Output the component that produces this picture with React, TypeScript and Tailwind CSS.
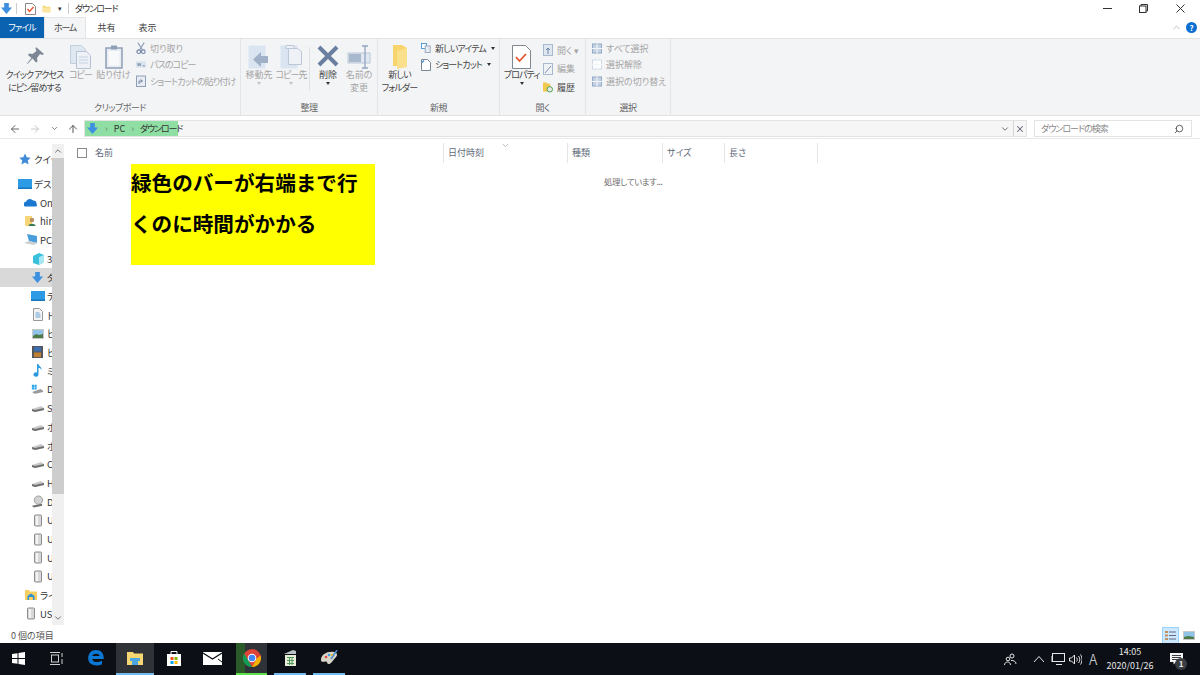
import React from "react";
import { ArrowLeft, ArrowRight, ArrowUp, ChevronDown, ChevronUp, Search, X } from "lucide-react";

const DownloadIcon = ({ size = 14 }: { size?: number }) => (
  <svg width={size} height={size} viewBox="0 0 14 14" className="shrink-0">
    <path d="M4.500 1h5v5H13L7 13 1 6h3.500z" fill="#3d8fe0" />
  </svg>
);

const Disk = () => (
  <svg width="14" height="12" viewBox="0 0 14 12" className="shrink-0">
    <path d="M1 7l9-3 3 2v2l-9 2-3-1z" fill="#c9c9c9" />
    <path d="M1 7l3 1 9-2v2l-9 2-3-1z" fill="#6f6f6f" />
  </svg>
);

const Usb = () => (
  <svg width="10" height="13" viewBox="0 0 10 13" className="shrink-0">
    <rect x="1.500" y="1" width="7" height="11" rx="1" fill="#d8d8d8" stroke="#8d8d8d" />
    <rect x="3" y="2" width="2" height="9" fill="#f4f4f4" />
  </svg>
);

const Folder = ({ w = 14, h = 12 }: { w?: number; h?: number }) => (
  <svg width={w} height={h} viewBox="0 0 14 12" className="shrink-0">
    <path d="M1 1h4l1 1.500h7V11H1z" fill="#f8d775" />
    <path d="M1 4h12v7H1z" fill="#fbe5a0" />
  </svg>
);

const ScreenIcon = () => (
  <svg width="14" height="10" viewBox="0 0 14 10" className="shrink-0">
    <rect width="14" height="10" fill="#2d9ae6" />
    <rect y="8.500" width="14" height="1.500" fill="#1774bd" />
  </svg>
);

const DocIcon = () => (
  <svg width="10" height="13" viewBox="0 0 10 13" className="shrink-0">
    <path d="M.5.5h6l3 3v9H.5z" fill="#f3f3f3" stroke="#9a9a9a" />
    <path d="M2.500 5h4M2.500 7h5M2.500 9h5" stroke="#6aa3d4" />
  </svg>
);

const PicIcon = () => (
  <svg width="12" height="10" viewBox="0 0 12 10" className="shrink-0">
    <rect width="12" height="10" fill="#c9c9c9" />
    <rect x="1" y="1" width="10" height="8" fill="#8fc4e8" />
    <path d="M1 7l3-2 3 1 4-1v4H1z" fill="#4d7a48" />
  </svg>
);

const VideoIcon = () => (
  <svg width="11" height="12" viewBox="0 0 11 12" className="shrink-0">
    <rect width="11" height="12" fill="#55565c" />
    <rect x="2" y="1" width="7" height="4.500" fill="#3d6fb0" />
    <rect x="2" y="6.500" width="7" height="4.500" fill="#c08033" />
  </svg>
);

const CubeIcon = () => (
  <svg width="12" height="12" viewBox="0 0 12 12" className="shrink-0">
    <path d="M1 3l6-3 5 2v7l-5 3-6-2z" fill="#39c1dc" />
    <path d="M7 4l5-2v7l-5 3z" fill="#a7e6f2" />
  </svg>
);

type NavRow = { indent: number; icon: React.ReactNode; text: string; selected?: boolean; gap?: boolean };

const navRows: NavRow[] = [
  { indent: 18, text: "クイック アクセス", gap: true, icon: <svg width="12" height="12" viewBox="0 0 24 24"><path d="M12 1l3.500 7.500 8 1-6 5.500 1.700 8L12 19l-7.200 4 1.700-8-6-5.500 8-1z" fill="#3f8bd8" /></svg> },
  { indent: 18, text: "デスクトップ", icon: <ScreenIcon /> },
  { indent: 24, text: "OneDrive", icon: <svg width="13" height="9" viewBox="0 0 13 9"><path d="M1 8.500a2.500 2.500 0 0 1 1-4.700 4 4 0 0 1 7-1.300 3 3 0 0 1 3.500 3.500 1.500 1.500 0 0 1-.5 2.500z" fill="#1b78d0" /></svg> },
  { indent: 24, text: "hiro", icon: <svg width="11" height="12" viewBox="0 0 11 12"><path d="M0 1h7v10H0z" fill="#f6d676" /><circle cx="7" cy="5" r="2.200" fill="#b98e62" /><path d="M3.500 11c0-3 7-3 7 0z" fill="#3b7a57" /></svg> },
  { indent: 24, text: "PC", icon: <svg width="13" height="12" viewBox="0 0 13 12"><path d="M3 0l10 2v7L5 7z" fill="#4a9ddd" /><path d="M0 9l5-2 8 2-3 2z" fill="#c9ced2" /></svg> },
  { indent: 31, text: "3D オブジェクト", icon: <CubeIcon /> },
  { indent: 31, text: "ダウンロード", selected: true, icon: <DownloadIcon size={13} /> },
  { indent: 31, text: "デスクトップ", icon: <ScreenIcon /> },
  { indent: 31, text: "ドキュメント", icon: <DocIcon /> },
  { indent: 31, text: "ピクチャ", icon: <PicIcon /> },
  { indent: 31, text: "ビデオ", icon: <VideoIcon /> },
  { indent: 31, text: "ミュージック", icon: <svg width="9" height="13" viewBox="0 0 9 13"><path d="M4 0h1.300c.3 2 3.700 3 3.200 6-.7-1.500-2-2-3-2.200V10.500a2.500 2.200 0 1 1-1.500-2z" fill="#2a9be0" /></svg> },
  { indent: 31, text: "Data (C:)", icon: <svg width="15" height="13" viewBox="0 0 15 13"><path d="M1 1h2.500v2.500H1zM4 1h2.500v2.500H4zM1 4h2.500v2.500H1zM4 4h2.500v2.500H4z" fill="#2aa6e8" /><path d="M2 9l9-3 3 2v1.500l-9 2-3-1z" fill="#9a9a9a" /></svg> },
  { indent: 31, text: "SD", icon: <Disk /> },
  { indent: 31, text: "ボリューム", icon: <Disk /> },
  { indent: 31, text: "ボリューム", icon: <Disk /> },
  { indent: 31, text: "CD", icon: <Disk /> },
  { indent: 31, text: "HD", icon: <Disk /> },
  { indent: 31, text: "DVD", icon: <svg width="14" height="14" viewBox="0 0 14 14"><circle cx="8" cy="5" r="4.500" fill="#d2d2d2" stroke="#999" /><path d="M1 11l11-2v2l-9 2z" fill="#6f6f6f" /></svg> },
  { indent: 31, text: "USB", icon: <Usb /> },
  { indent: 31, text: "USB", icon: <Usb /> },
  { indent: 31, text: "USB", icon: <Usb /> },
  { indent: 31, text: "USB", icon: <Usb /> },
  { indent: 24, text: "ライブラリ", icon: <svg width="12" height="12" viewBox="0 0 12 12"><path d="M0 1h4l1 1.500h7V11H0z" fill="#f6cf62" /><path d="M2.500 11V7L6 4.500 9.500 7v4H8V8H4v3z" fill="#2d8fd8" /></svg> },
  { indent: 24, text: "USB ドライブ", icon: <Usb /> },
];

const NavPane = () => (
  <div className="flex w-[65px] shrink-0">
    <div className="w-[52px] overflow-hidden pt-[11px]">
      {navRows.map((row, i) => (
        <div key={i} className={row.selected ? "bg-[#d9d9d9]" : ""}>
          <div
            className="flex h-[18.700px] items-center gap-[3px] whitespace-nowrap text-[9.500px] text-[#333]"
            style={{ paddingLeft: row.indent }}
          >
            <span className="flex w-[13px] shrink-0 justify-center">{row.icon}</span>
            <span>{row.text}</span>
          </div>
          {row.gap && <div className="h-[6px]" />}
        </div>
      ))}
    </div>
    <div className="mt-[5px] mb-[3px] flex w-[12px] flex-col bg-[#f0f0f0]">
      <div className="flex h-[14px] items-center justify-center">
        <ChevronUp size={10} strokeWidth={2} className="text-[#555]" />
      </div>
      <div className="h-[336px] bg-[#cdcdcd]" />
      <div className="flex-1" />
      <div className="flex h-[14px] items-center justify-center">
        <ChevronDown size={10} strokeWidth={2} className="text-[#555]" />
      </div>
    </div>
  </div>
);

const Large = ({ w, icon, lines, disabled, drop, tight, lift = 0 }: { w: number; icon: React.ReactNode; lines: string[]; disabled?: boolean; drop?: boolean; tight?: boolean; lift?: number }) => (
  <div className="flex shrink-0 flex-col items-center pt-[1px]" style={{ width: w }}>
    <div className="flex h-[28px] items-end justify-center" style={{ paddingBottom: lift }}>{icon}</div>
    <div className={`text-center text-[9px] leading-[12.500px] whitespace-nowrap ${tight ? "tracking-[-0.9px]" : ""} ${disabled ? "text-[#a4a4a4]" : "text-[#444]"}`}>
      {lines.map((l) => (
        <div key={l}>{l}</div>
      ))}
    </div>
    {drop && <div className={`h-0 w-0 border-x-[2.500px] border-t-[3px] border-x-transparent ${disabled ? "border-t-[#c4c4c4]" : "border-t-[#333]"}`} />}
  </div>
);

const Small = ({ icon, text, disabled, drop, tight, h = 16.5 }: { icon: React.ReactNode; text: string; disabled?: boolean; drop?: boolean; tight?: boolean; h?: number }) => (
  <div className="flex items-center gap-[4px] whitespace-nowrap" style={{ height: h }}>
    <span className="flex w-[10px] justify-center">{icon}</span>
    <span className={`text-[9px] ${tight ? "tracking-[-0.9px]" : ""} ${disabled ? "text-[#a4a4a4]" : "text-[#444]"}`}>{text}</span>
    {drop && <span className="ml-[1px] h-0 w-0 border-x-[2.500px] border-t-[3px] border-x-transparent border-t-[#333]" />}
  </div>
);

const Group = ({ w, label, children }: { w: number; label: string; children: React.ReactNode }) => (
  <div className="flex shrink-0 flex-col border-r border-[#e2e4e7]" style={{ width: w }}>
    <div className="flex h-[62px] pt-[1px]">{children}</div>
    <div className="flex flex-1 items-center justify-center pb-[1px] text-[9px] tracking-[-0.5px] text-[#666]">{label}</div>
  </div>
);

const CopyIcon = () => (
  <svg width="21" height="24" viewBox="0 0 21 24">
    <path d="M.5.500h11l4 4v14H.5z" fill="#dfe7f1" stroke="#c3cfdf" />
    <path d="M6.500 6.500h10l4 4v13h-14z" fill="#eef2f7" stroke="#b6c3d5" />
    <path d="M9 12h9M9 15h9M9 18h9" stroke="#c3d0e0" />
  </svg>
);

const PasteIcon = () => (
  <svg width="18" height="24" viewBox="0 0 18 24">
    <rect x="1" y="3" width="16" height="20" fill="#e9edf3" stroke="#8f9fb8" strokeWidth="1.500" />
    <rect x="6" y="0.500" width="6" height="4" fill="#8f9fb8" />
    <rect x="3.500" y="6" width="11" height="14.500" fill="#f8f9fb" />
  </svg>
);

const MoveIcon = ({ copy }: { copy?: boolean }) => (
  <svg width="22" height="24" viewBox="0 0 22 24">
    <rect x="0.500" y="0.500" width="17" height="23" fill="#dbe5f1" />
    {copy ? (
      <>
        <path d="M8.500 3.500h9l4 3v13h-13z" fill="#eef2f7" stroke="#bcc8d8" />
        <path d="M6 .500h8v3H6z" fill="#eef2f7" stroke="#bcc8d8" />
      </>
    ) : (
      <path d="M20 11v7h-7v4l-8-7.500L13 7v4z" fill="#9fb0c7" />
    )}
  </svg>
);

const ClipboardGroup = () => (
  <Group w={241} label="クリップボード">
    <Large w={69} tight lift={4} lines={["クイック アクセス", "にピン留めする"]} icon={
      <svg width="18" height="18" viewBox="0 0 18 18"><path d="M10 0l8 7-2 1-2-1-3 4 .5 3.500-1.500 1-3.500-4L1.500 17 1 16.500l4.500-5.500L2 8l1-1.500 3.500.5 4-3-1-2z" fill="#7d8694" /></svg>
    } />
    <Large w={23} tight disabled lines={["コピー"]} icon={<CopyIcon />} />
    <Large w={43} disabled lines={["貼り付け"]} icon={<PasteIcon />} />
    <div className="flex flex-col pl-[1px]">
      <Small disabled text="切り取り" icon={<svg width="11" height="13" viewBox="0 0 11 13"><path d="M2 0l5 8M9 0L4 8" stroke="#8f9fb8" strokeWidth="1.200" /><circle cx="3" cy="10" r="2" fill="none" stroke="#6f83a3" strokeWidth="1.200" /><circle cx="8" cy="10" r="2" fill="none" stroke="#6f83a3" strokeWidth="1.200" /></svg>} />
      <Small disabled tight text="パスのコピー" icon={<svg width="11" height="7" viewBox="0 0 11 7"><rect width="11" height="7" fill="#dce4ee" /><path d="M1.500 2l1 3 1-3 1 3 1-3M7 5h3" stroke="#6f83a3" strokeWidth=".8" fill="none" /></svg>} />
      <Small disabled tight text="ショートカットの貼り付け" icon={<svg width="10" height="12" viewBox="0 0 10 12"><rect x=".5" y="1" width="9" height="10.500" fill="#e9edf3" stroke="#8f9fb8" /><path d="M3 9V6h3M4.500 4.500L6.500 6 4.500 7.500" stroke="#6f83a3" fill="none" /></svg>} />
    </div>
  </Group>
);

const OrganizeGroup = () => (
  <Group w={137} label="整理">
    <div className="w-[2px]" />
    <Large w={32} disabled drop lines={["移動先"]} icon={<MoveIcon />} />
    <Large w={32} tight disabled drop lines={["コピー先"]} icon={<MoveIcon copy />} />
    <div className="mx-[2px] mt-[7px] mb-[10px] w-px bg-[#e0e2e6]" />
    <Large w={32} drop lift={2} lines={["削除"]} icon={
      <svg width="22" height="22" viewBox="0 0 22 22"><path d="M2 2l18 18M20 2L2 20" stroke="#6a7f9f" strokeWidth="4" /></svg>
    } />
    <Large w={30} disabled lines={["名前の", "変更"]} icon={
      <svg width="24" height="24" viewBox="0 0 24 24"><rect x="1" y="8" width="22" height="10" fill="#dfe7f1" stroke="#bcc8d8" /><rect x="2" y="9" width="12" height="8" fill="#a8b8cd" /><path d="M15 1h6M15 23h6M18 1v22" stroke="#93a5bf" strokeWidth="1.300" /></svg>
    } />
  </Group>
);

const NewGroup = () => (
  <Group w={122} label="新規">
    <Large w={43} tight lines={["新しい", "フォルダー"]} icon={
      <svg width="16" height="24" viewBox="0 0 16 24"><path d="M1 0h9l5 3v19l-5-1H1z" fill="#f7d46c" /><path d="M5 6l10-3v19l-10 2z" fill="#fbe08c" /></svg>
    } />
    <div className="flex flex-col">
      <Small drop tight text="新しいアイテム" icon={<svg width="12" height="12" viewBox="0 0 12 12"><rect x=".5" y=".5" width="6" height="6" fill="#fff" stroke="#3a8ccf" /><rect x="5" y="3.500" width="6" height="8" fill="#e6ebf1" stroke="#8f9fb8" /></svg>} />
      <Small drop tight text="ショートカット" icon={<svg width="10" height="12" viewBox="0 0 10 12"><path d="M.5.500h6l3 3v8H.5z" fill="#fff" stroke="#7b8794" /><path d="M1 3.500l2-2" stroke="#3a8ccf" strokeWidth="1.300" /></svg>} />
    </div>
  </Group>
);

const OpenGroup = () => (
  <Group w={86} label="開く">
    <Large w={43} tight drop lines={["プロパティ"]} icon={
      <svg width="19" height="24" viewBox="0 0 19 24"><path d="M.5.500h13l5 5v18H.5z" fill="#fff" stroke="#7f8790" /><path d="M4 12l3.500 4L14 9" stroke="#e5532d" strokeWidth="1.800" fill="none" /></svg>
    } />
    <div className="flex flex-col pt-[1px]">
      <Small disabled h={18.5} text="開く ▾" icon={<svg width="10" height="12" viewBox="0 0 10 12"><rect x=".5" y=".5" width="9" height="11" fill="#dfe7f1" stroke="#a8b8cd" /><path d="M5 10V4M3 6l2-2 2 2" stroke="#6f83a3" fill="none" /></svg>} />
      <Small disabled h={18.5} text="編集" icon={<svg width="10" height="12" viewBox="0 0 10 12"><rect x=".5" y=".5" width="9" height="11" fill="#eef2f7" stroke="#a8b8cd" /><path d="M2 10l6-7" stroke="#7f93b0" /></svg>} />
      <Small h={18.5} text="履歴" icon={<svg width="11" height="11" viewBox="0 0 11 11"><path d="M0 0h4l1 1.500h3V10H0z" fill="#f2c94f" /><circle cx="7.500" cy="7.500" r="3" fill="#e8e8e8" stroke="#3f9a4e" /></svg>} />
    </div>
  </Group>
);

const SelectIcon = ({ faded }: { faded?: boolean }) => (
  <svg width="11" height="11" viewBox="0 0 11 11">
    <rect x=".5" y=".5" width="10" height="10" fill={faded ? "#fff" : "#c3d2e4"} stroke={faded ? "#ccd7e5" : "#8fa5c2"} />
    <path d="M5.500 0v11M0 5.500h11" stroke="#f3f4f6" strokeWidth="1.200" />
  </svg>
);

const SelectGroup = () => (
  <Group w={85} label="選択">
    <div className="flex flex-col pl-[6px]">
      <Small disabled text="すべて選択" icon={<SelectIcon />} />
      <Small disabled text="選択解除" icon={<SelectIcon faded />} />
      <Small disabled text="選択の切り替え" icon={<SelectIcon />} />
    </div>
  </Group>
);

const AddressRow = () => (
  <div className="flex h-[22px] shrink-0 items-center pt-[3px] text-[#333]">
    <div className="flex w-[84px] shrink-0 items-center justify-between pr-[5px] pl-[9px]">
      <ArrowLeft size={12} className="text-[#666]" />
      <ArrowRight size={12} className="text-[#c8c8c8]" />
      <ChevronDown size={9} className="text-[#666]" />
      <ArrowUp size={12} className="text-[#555]" />
    </div>
    <div className="flex h-[17px] w-[943px] items-center justify-between border border-[#e3e3e3] bg-[#f6f6f6]">
      <div className="flex h-full w-[93px] items-center gap-[6px] whitespace-nowrap bg-[#8fdea3] pl-[1px] text-[9px]">
        <DownloadIcon size={13} />
        <span className="text-[#777]">›</span>
        <span>PC</span>
        <span className="text-[#777]">›</span>
        <span className="tracking-[-1.100px]">ダウンロード</span>
      </div>
      <div className="flex h-full items-center">
        <ChevronDown size={10} strokeWidth={2} className="mr-[3px] text-[#555]" />
        <div className="flex h-full w-[13px] items-center justify-center border-l border-[#d5d5d5]">
          <X size={10} strokeWidth={2.5} className="text-[#667]" />
        </div>
      </div>
    </div>
    <div className="ml-[7px] flex h-[17px] w-[158px] items-center justify-between border border-[#e3e3e3] bg-white pr-[7px] pl-[6px] text-[9px] text-[#8a8a8a]">
      <span className="tracking-[-1px]">ダウンロードの検索</span>
      <Search size={10} strokeWidth={2.2} className="scale-x-[-1] text-[#555]" />
    </div>
  </div>
);

const columns = [
  { name: "日付時刻", w: 124 },
  { name: "種類", w: 95 },
  { name: "サイズ", w: 62 },
  { name: "長さ", w: 93 },
];

const FileList = () => (
  <div className="relative min-w-0 flex-1">
    <div className="flex h-[22px] items-center pt-[6px] text-[9px] text-[#5f6b7a]">
      <div className="flex w-[378px] shrink-0 items-center pl-[12px]">
        <div className="h-[10px] w-[10px] border border-[#8a8a8a] bg-white" />
        <span className="ml-[8px]">名前</span>
      </div>
      {columns.map((c) => (
        <div key={c.name} className="flex h-[20px] shrink-0 items-center border-l border-[#e5e5e5] pl-[4px]" style={{ width: c.w }}>
          {c.name}
        </div>
      ))}
      <div className="h-[20px] border-l border-[#e5e5e5]" />
    </div>
    <ChevronDown size={9} className="absolute top-[2px] left-[436px] text-[#9aa3ae]" />
    <div className="mt-[14px] pl-[539px] text-[8.500px] tracking-[-0.4px] text-[#6d6d6d]">処理しています...</div>
    <div className="absolute top-[25px] left-[66px] h-[101px] w-[244px] bg-[#ffff00] text-[20.600px] leading-[41px] font-bold text-black [font-feature-settings:normal]">
      <div className="-mt-[2px]">緑色のバーが右端まで行</div>
      <div>くのに時間がかかる</div>
    </div>
  </div>
);

const StatusBar = () => (
  <div className="flex h-[15px] shrink-0 items-center justify-between">
    <span className="pl-[11px] text-[9px] text-[#555]">0 個の項目</span>
    <div className="flex items-center pr-[5px]">
      <div className="flex h-[17px] w-[17px] items-center justify-center border border-[#99d1ff] bg-[#cce8ff]">
        <svg width="11" height="11" viewBox="0 0 11 11"><path d="M0 1h3v2H0zM0 4.500h3v2H0zM0 8h3v2H0z" fill="#c09060" /><path d="M4 2h7M4 5.500h7M4 9h7" stroke="#667" /></svg>
      </div>
      <div className="ml-[3px] flex h-[17px] w-[13px] items-center justify-center">
        <svg width="12" height="9" viewBox="0 0 12 9"><rect width="12" height="9" fill="#c9c9c9" /><rect x="1" y="1" width="10" height="7" fill="#8fc4e8" /><path d="M1 6l4-1 6 1v2H1z" fill="#4d7a48" /></svg>
      </div>
    </div>
  </div>
);

const TaskSlot = ({ w, bar, active, children }: { w: number; bar?: string; active?: boolean; children: React.ReactNode }) => (
  <div className={`flex h-full shrink-0 items-center justify-center border-b-2 ${active ? "bg-[#2f3338]" : ""} ${bar ?? "border-transparent"}`} style={{ width: w }}>
    {children}
  </div>
);

const Taskbar = () => (
  <div className="flex h-[32px] shrink-0 items-center bg-[#0c1016] text-white">
    <TaskSlot w={37}>
      <svg width="13" height="13" viewBox="0 0 13 13"><path d="M0 2l5.500-.8V6H0zM6.500 1l6.500-1v6H6.500zM0 7h5.500v4.800L0 11zM6.500 7H13v6l-6.500-1z" fill="#fff" /></svg>
    </TaskSlot>
    <TaskSlot w={39}>
      <svg width="14" height="13" viewBox="0 0 14 13" fill="none" stroke="#cfcfcf"><rect x="1.500" y="3" width="7" height="7" /><path d="M0 .500h10M0 12.500h10M12 1v4M12 7v5" /></svg>
    </TaskSlot>
    <TaskSlot w={40}>
      <svg width="16" height="16" viewBox="0 0 16 16"><path d="M8 0c5 0 8 3.500 7.800 9H4.200c.3 3.500 5.500 4 9.800 1.700v3.500C8.500 17 .2 15 .2 8.200.2 3.500 3.500 0 8 0zm3.600 6C11.600 3 4.800 3 4.300 6z" fill="#0a78d4" /></svg>
    </TaskSlot>
    <TaskSlot w={38} active bar="border-[#76b9ed]">
      <svg width="16" height="14" viewBox="0 0 16 14"><path d="M0 1h6l1 1.500h9V14H0z" fill="#f7d774" /><path d="M3 7h10v3h-2v4H5v-4H3z" fill="#4aa5e0" /></svg>
    </TaskSlot>
    <TaskSlot w={39}>
      <svg width="16" height="16" viewBox="0 0 16 16"><path d="M1 4h14v12H1z" fill="#fff" /><path d="M5 5V1.500h6V5" fill="none" stroke="#fff" /><rect x="4.500" y="7" width="3" height="3" fill="#f25022" /><rect x="8.500" y="7" width="3" height="3" fill="#7fba00" /><rect x="4.500" y="11" width="3" height="3" fill="#00a4ef" /><rect x="8.500" y="11" width="3" height="3" fill="#ffb900" /></svg>
    </TaskSlot>
    <TaskSlot w={39}>
      <svg width="19" height="13" viewBox="0 0 19 13"><path d="M0 0h19v13H0z" fill="#fff" /><path d="M0 1l9.500 6L19 1" fill="none" stroke="#0c1016" strokeWidth="1.200" /><path d="M15 7l4 3" stroke="#0c1016" /></svg>
    </TaskSlot>
    <div className="w-[4px] shrink-0" />
    <div className="flex h-full w-[31px] shrink-0 items-center justify-center border-b-2 border-[#5ee04a] bg-gradient-to-r from-[#2a5a2a] from-[30%] to-[#2f3338] to-[30%]">
      <svg width="18" height="18" viewBox="0 0 18 18">
        <circle cx="9" cy="9" r="9" fill="#db4437" />
        <path d="M9 18A9 9 0 0 1 1.200 4.500L5 11l4 7z" fill="#0f9d58" />
        <path d="M9 18l4.800-8.500L17.600 6.500A9 9 0 0 1 9 18z" fill="#f4b400" />
        <circle cx="9" cy="9" r="4.300" fill="#fff" />
        <circle cx="9" cy="9" r="3.300" fill="#4285f4" />
      </svg>
    </div>
    <div className="w-[7px] shrink-0" />
    <TaskSlot w={32} bar="border-[#76b9ed]">
      <svg width="18" height="18" viewBox="0 0 18 18"><path d="M3 5l9-4 3 1v3z" fill="#b8c4c4" /><path d="M4 6h11v11H4z" fill="#e8ecd8" /><path d="M6 8.500h7M6 11.500h7M6 14.500h7M8.500 8v8M11 8v8" stroke="#4f9a5a" /></svg>
    </TaskSlot>
    <div className="w-[7px] shrink-0" />
    <TaskSlot w={32} bar="border-[#76b9ed]">
      <svg width="18" height="16" viewBox="0 0 18 16"><path d="M1 10C1 4 8 1 14 2c3 .5 4 3 2 5l-5 6c-2 2-4 1-4-1 0-2-6 2-6-2z" fill="#d8d4c8" /><circle cx="6" cy="7" r="1.300" fill="#e04a3a" /><circle cx="9" cy="5" r="1.300" fill="#3aa0e0" /><circle cx="12" cy="5" r="1.300" fill="#f0c030" /><path d="M17 0l-6 9" stroke="#4a8ad0" strokeWidth="1.500" /></svg>
    </TaskSlot>
    <div className="flex-1" />
    <div className="flex h-full items-center pr-[17px] text-[#e6e6e6]">
      <svg width="13" height="13" viewBox="0 0 13 13" fill="none" stroke="#e6e6e6"><circle cx="8" cy="3" r="2" /><circle cx="4" cy="6" r="1.800" /><path d="M.5 12c0-4 6-4 6 0M7 7.500c2.500-.5 5 1 5 3.500" /></svg>
      <svg width="12" height="8" viewBox="0 0 12 8" fill="none" stroke="#e6e6e6" className="ml-[16px]"><path d="M1 7l5-5.500L11 7" /></svg>
      <svg width="14" height="12" viewBox="0 0 14 12" fill="none" stroke="#e6e6e6" className="ml-[6px]"><rect x="1.500" y=".5" width="12" height="8" /><path d="M5 11.500h6M0 3v6" /></svg>
      <svg width="13" height="11" viewBox="0 0 13 11" fill="none" stroke="#e6e6e6" className="ml-[4px]"><path d="M.5 4v3h2l3 3V1l-3 3zM7.500 3.500c1 1 1 3 0 4M9.500 2c1.700 2 1.700 5 0 7M11.500.5c2 3 2 7 0 10" /></svg>
      <span className="ml-[5px] w-[12px] text-center text-[14px] leading-none font-light">A</span>
      <div className="ml-[3px] w-[56px] text-center text-[9px] leading-[14px]">
        <div>14:05</div>
        <div>2020/01/26</div>
      </div>
      <div className="relative ml-[12px] h-[13px] w-[13px]">
        <svg width="13" height="12" viewBox="0 0 13 12"><path d="M0 0h13v9H6L3.500 11.500V9H0z" fill="#f3f3f3" /><path d="M2 2.500h9M2 4.500h9M2 6.500h6" stroke="#0c1016" strokeWidth=".8" /></svg>
        <div className="absolute top-[5px] left-[5px] flex h-[12px] w-[12px] items-center justify-center rounded-full bg-[#3a3d42] text-[8px] font-bold">1</div>
      </div>
    </div>
  </div>
);

export default function App() {
  return (
    <div className="flex h-[675px] w-[1200px] flex-col overflow-hidden bg-white font-['Noto_Sans_CJK_JP','Noto_Sans',sans-serif] [font-feature-settings:'palt']">
      {/* title bar */}
      <div className="flex h-[17px] shrink-0 items-center text-[#333]">
        <div className="flex items-center">
          <DownloadIcon size={13} />
          <div className="ml-[3px] h-[11px] w-px bg-[#ccc]" />
          <svg width="11" height="12" viewBox="0 0 11 12" className="ml-[8px]"><path d="M.5.500h7l3 3v8H.5z" fill="#fff" stroke="#888" /><path d="M2.500 6l2 2.500L8.500 4" stroke="#e5532d" strokeWidth="1.400" fill="none" /></svg>
          <span className="ml-[6px]"><Folder w={9} h={12} /></span>
          <span className="ml-[7px] text-[7px] leading-none">▾</span>
          <div className="ml-[6px] h-[11px] w-px bg-[#ccc]" />
          <span className="ml-[6px] text-[9px] tracking-[-1.100px]">ダウンロード</span>
        </div>
        <div className="flex-1" />
        <svg width="9" height="9" viewBox="0 0 9 9" fill="none" stroke="#333"><path d="M0 4.500h9" /></svg>
        <svg width="9" height="9" viewBox="0 0 9 9" fill="none" stroke="#333" className="ml-[27px]"><rect x=".5" y="2" width="6.500" height="6.500" /><path d="M2 2V.5h6.500V7H7" /></svg>
        <svg width="9" height="9" viewBox="0 0 9 9" fill="none" stroke="#333" className="mr-[15px] ml-[28px]"><path d="M.5.500l8 8M8.500.500l-8 8" /></svg>
      </div>
      {/* tabs */}
      <div className="flex h-[21px] shrink-0 items-stretch text-[9px] text-[#444]">
        <div className="flex w-[44px] items-center justify-center bg-[#0b62b0] tracking-[-0.9px] text-white">ファイル</div>
        <div className="relative z-10 flex h-[21px] w-[42px] items-center justify-center border-x border-t border-[#e4e4e4] bg-[#f4f5f7] tracking-[-1.200px]">ホーム</div>
        <div className="flex w-[41px] items-center justify-center">共有</div>
        <div className="flex w-[41px] items-center justify-center">表示</div>
        <div className="flex-1" />
        <div className="flex items-center pr-[2px]">
          <ChevronUp size={11} className="text-[#bbb]" />
          <div className="mr-[1px] ml-[4px] flex h-[11px] w-[11px] items-center justify-center rounded-full bg-[#0a6fd0] text-[8px] font-bold text-white">?</div>
        </div>
      </div>
      {/* ribbon */}
      <div className="flex h-[78px] shrink-0 border-y border-[#e3e3e3] bg-[#f3f4f6]">
        <ClipboardGroup />
        <OrganizeGroup />
        <NewGroup />
        <OpenGroup />
        <SelectGroup />
      </div>
      <AddressRow />
      <div className="flex min-h-0 flex-1 border-t border-[#e8e8e8]">
        <NavPane />
        <FileList />
      </div>
      <StatusBar />
      <Taskbar />
    </div>
  );
}
